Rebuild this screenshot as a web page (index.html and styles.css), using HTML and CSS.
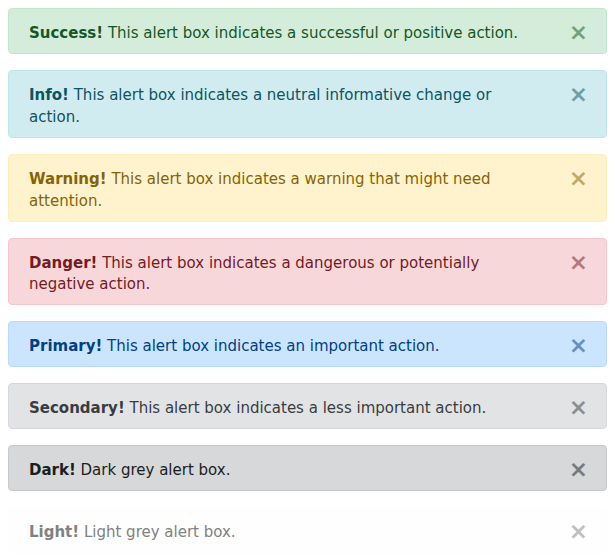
FILE: index.html
```html
<!DOCTYPE html>
<html>
<head>
<meta charset="utf-8">
<link rel="stylesheet" href="styles.css">
</head>
<body>
<div class="alert alert-success"><div class="msg"><strong>Success!</strong> This alert box indicates a successful or positive action.</div><button class="close">&times;</button></div>
<div class="alert alert-info"><div class="msg"><strong>Info!</strong> This alert box indicates a neutral informative change or action.</div><button class="close">&times;</button></div>
<div class="alert alert-warning"><div class="msg"><strong>Warning!</strong> This alert box indicates a warning that might need attention.</div><button class="close">&times;</button></div>
<div class="alert alert-danger"><div class="msg"><strong>Danger!</strong> This alert box indicates a dangerous or potentially negative action.</div><button class="close">&times;</button></div>
<div class="alert alert-primary"><div class="msg"><strong>Primary!</strong> This alert box indicates an important action.</div><button class="close">&times;</button></div>
<div class="alert alert-secondary"><div class="msg"><strong>Secondary!</strong> This alert box indicates a less important action.</div><button class="close">&times;</button></div>
<div class="alert alert-dark"><div class="msg"><strong>Dark!</strong> Dark grey alert box.</div><button class="close">&times;</button></div>
<div class="alert alert-light"><div class="msg"><strong>Light!</strong> Light grey alert box.</div><button class="close">&times;</button></div>
</body>
</html>
```
FILE: styles.css
```css
body {
  margin: 8px;
  font-family: "DejaVu Sans", Verdana, sans-serif;
  font-size: 15px;
  line-height: 21.75px;
  background: #fff;
}
.alert {
  position: relative;
  display: flex;
  padding: 14px 64px 8.25px 20px;
  margin-bottom: 16px;
  border: 1px solid transparent;
  border-radius: 4px;
}
.msg { flex: 1; }
.msg strong { font-weight: 700; }
.close {
  position: absolute;
  top: 0;
  right: 0;
  padding: 13px 18px 0 0;
  background: transparent;
  border: 0;
  font-family: "DejaVu Sans", sans-serif;
  font-size: 23px;
  font-weight: 700;
  line-height: 21px;
  color: inherit;
  opacity: .5;
  cursor: pointer;
}
.alert-success { background: #d4edda; border-color: #c3e6cb; color: #155724; }
.alert-info { background: #d1ecf1; border-color: #bee5eb; color: #0c5460; }
.alert-warning { background: #fff3cd; border-color: #ffeeba; color: #856404; }
.alert-danger { background: #f8d7da; border-color: #f5c6cb; color: #721c24; }
.alert-primary { background: #cce5ff; border-color: #b8daff; color: #004085; }
.alert-secondary { background: #e2e3e5; border-color: #d6d8db; color: #383d41; }
.alert-dark { background: #d6d8d9; border-color: #c6c8ca; color: #1b1e21; }
.alert-light { background: #fefefe; border-color: #fdfdfe; color: #818182; }
```
